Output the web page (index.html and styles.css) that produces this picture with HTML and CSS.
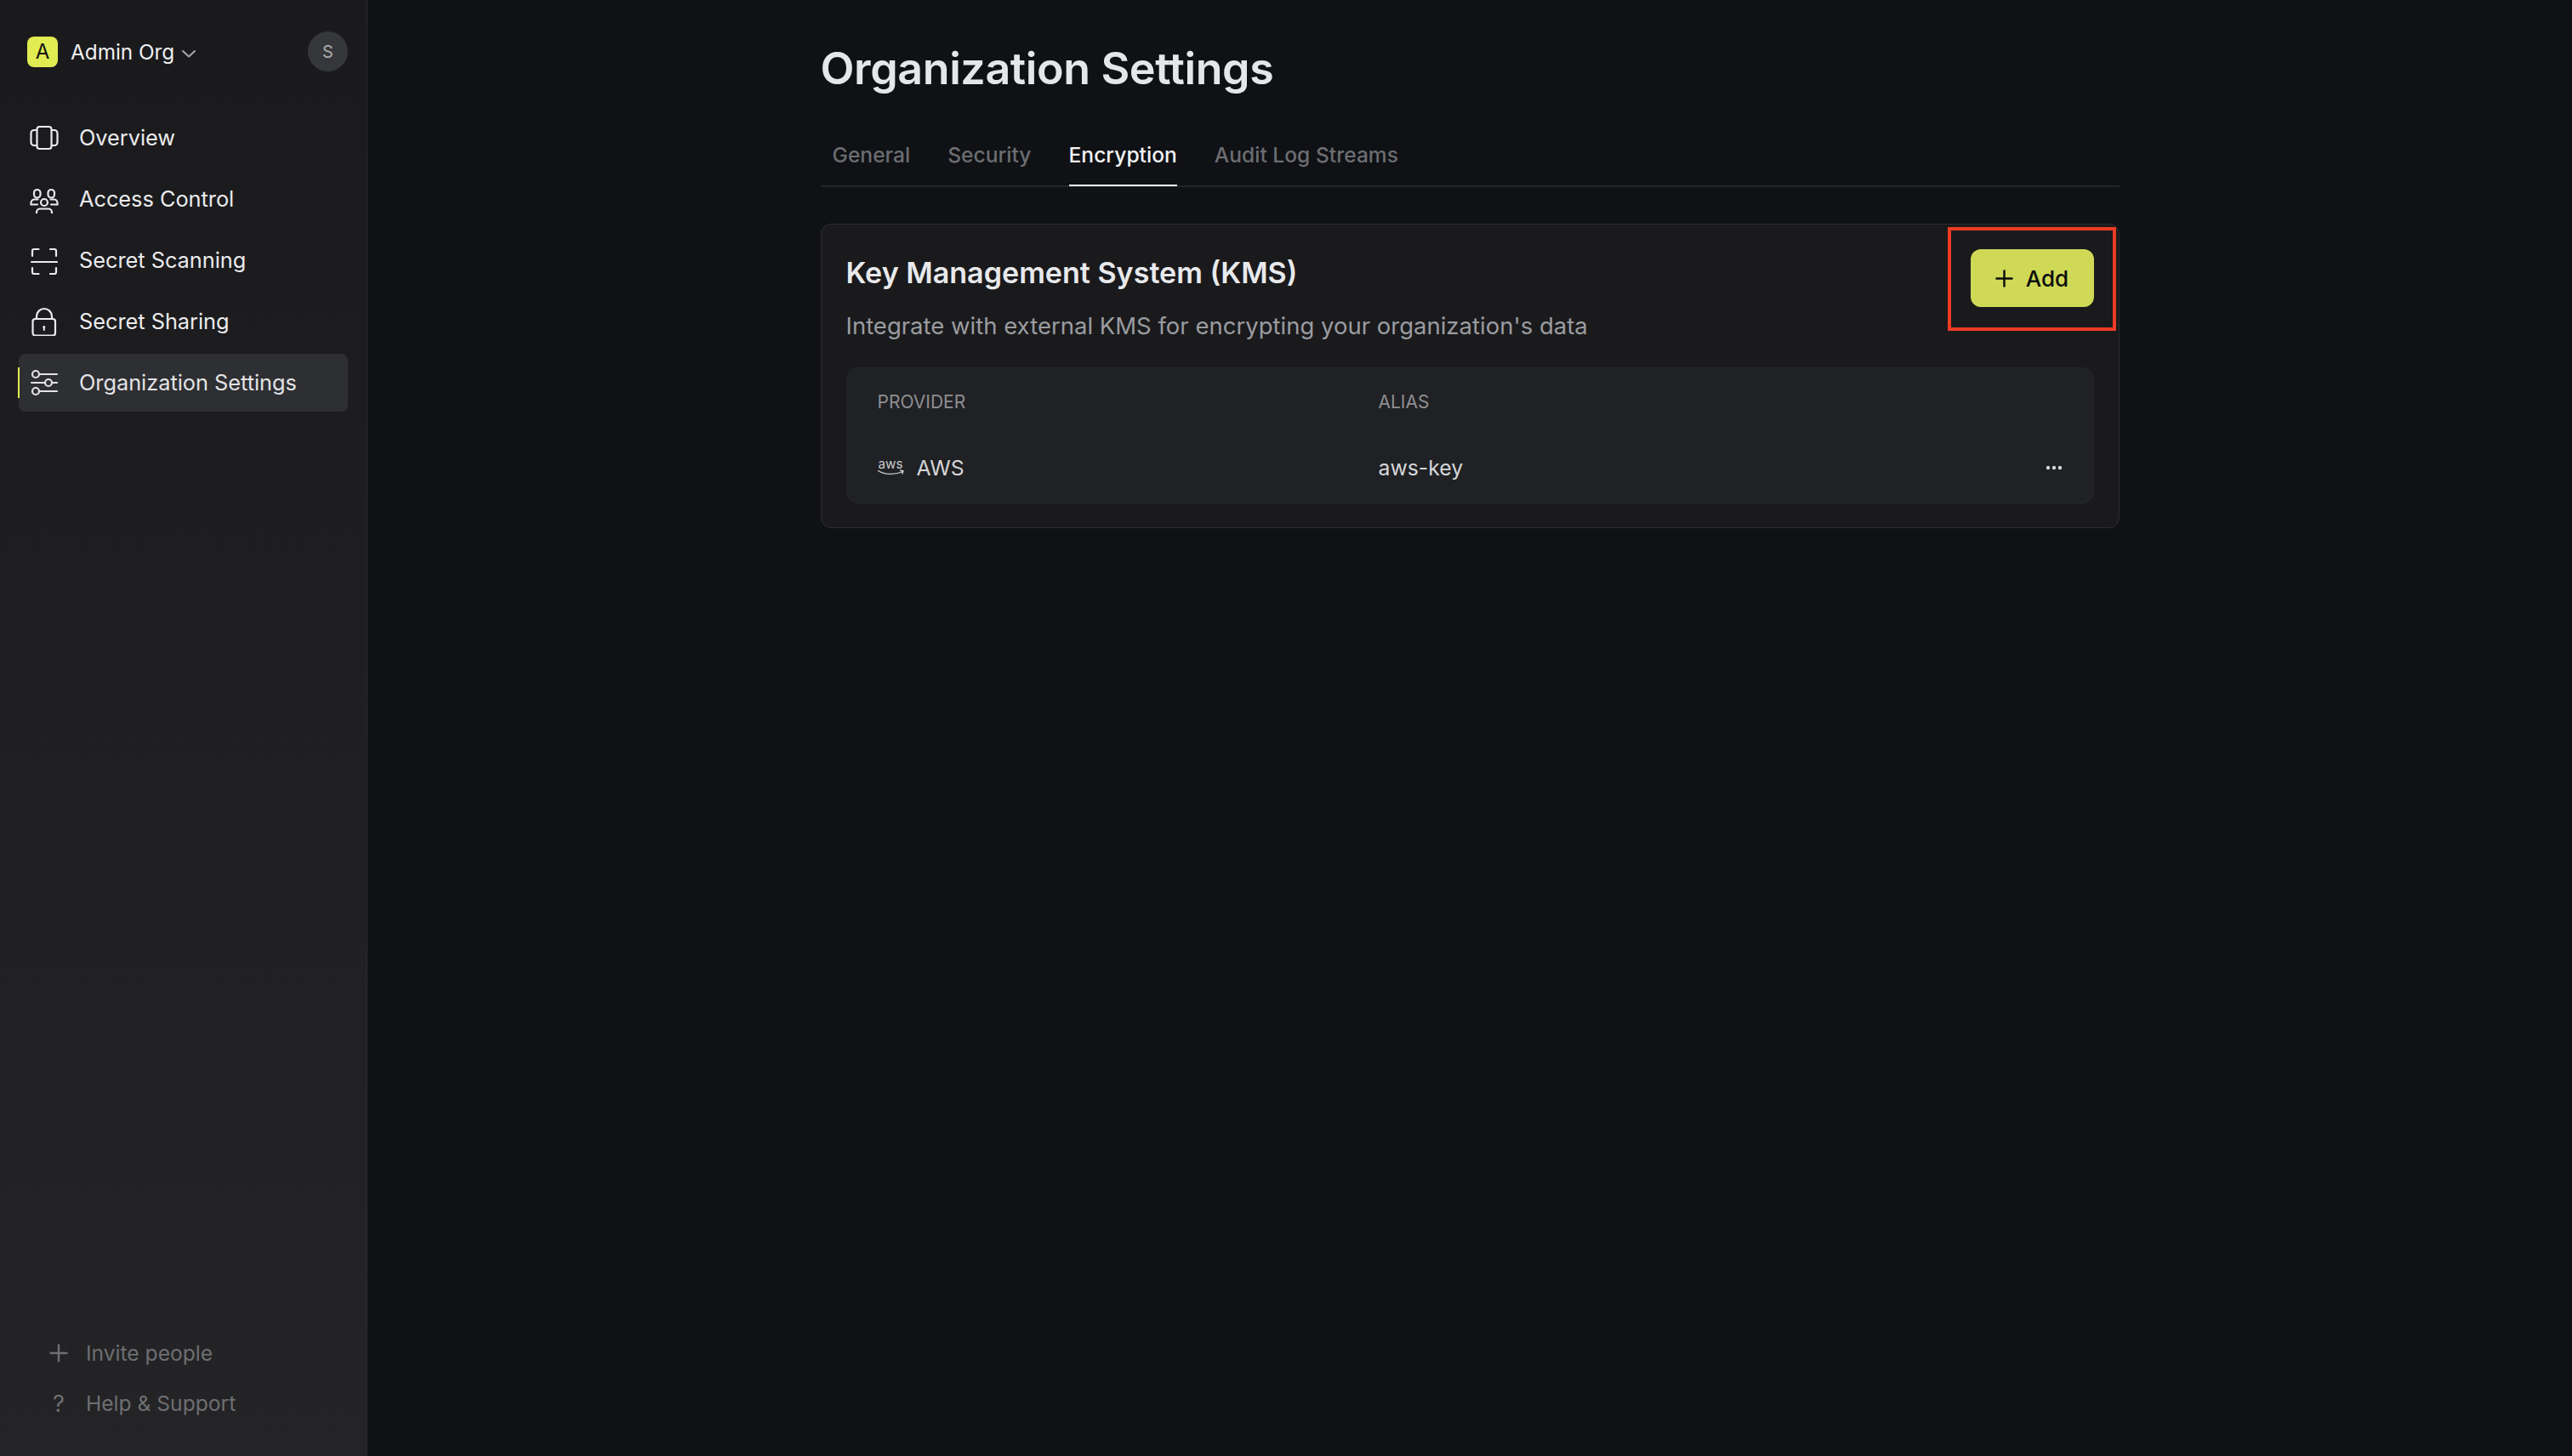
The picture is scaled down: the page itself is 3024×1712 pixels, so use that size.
FILE: index.html
```html
<!DOCTYPE html>
<html lang="en">
<head>
  <meta charset="UTF-8">
  <title>Organization Settings</title>
  <link rel="stylesheet" href="styles.css">
</head>
<body>
  <div class="app">
    <aside class="sidebar">
      <div class="org-row">
        <span class="org-logo">A</span>
        <span class="org-name">Admin Org</span>
        <svg class="org-chevron" viewBox="0 0 18 10" fill="none" stroke="#a8a8aa" stroke-width="2" stroke-linecap="round" stroke-linejoin="round"><path d="M2 2l7 6.5L16 2"/></svg>
        <span class="avatar">S</span>
      </div>

      <nav class="nav">
        <a class="nav-item">
          <svg class="nav-icon" viewBox="0 -2 34 34" fill="none" stroke="currentColor" stroke-width="2.2" stroke-linejoin="round"><rect x="8.5" y="2" width="17" height="26" rx="3"/><path d="M8.5 6H5a3.5 3.5 0 0 0-3.5 3.5v11A3.5 3.5 0 0 0 5 24h3.5M25.5 6H29a3.5 3.5 0 0 1 3.5 3.5v11A3.5 3.5 0 0 1 29 24h-3.5"/></svg>
          Overview
        </a>
        <a class="nav-item">
          <svg class="nav-icon" viewBox="0 -4 34 34" fill="none" stroke="currentColor" stroke-width="2.2" stroke-linecap="round"><rect x="5" y="2" width="7.5" height="9.5" rx="3.75"/><rect x="21.5" y="2" width="7.5" height="9.5" rx="3.75"/><rect x="13" y="13" width="8" height="8" rx="4"/><path d="M9.5 13.5H5.5a4 4 0 0 0-4 4v2H9M24.5 13.5h4a4 4 0 0 1 4 4v2H25"/><path d="M8 32v-3.5a4 4 0 0 1 4-4h10a4 4 0 0 1 4 4V32z"/></svg>
          Access Control
        </a>
        <a class="nav-item">
          <svg class="nav-icon" viewBox="0 0 34 34" fill="none" stroke="currentColor" stroke-width="2.2" stroke-linecap="round" stroke-linejoin="round"><path d="M3 12V6a2 2 0 0 1 2-2h5.500M24 4h5a2 2 0 0 1 2 2v6M31 26v5a2 2 0 0 1-2 2h-5M10.5 33H5a2 2 0 0 1-2-2v-5M2 19h30"/></svg>
          Secret Scanning
        </a>
        <a class="nav-item">
          <svg class="nav-icon" viewBox="0 0 34 34" fill="none" stroke="currentColor" stroke-width="2.2" stroke-linecap="round" stroke-linejoin="round"><rect x="3.5" y="14" width="26.5" height="19.5" rx="3"/><path d="M8 14v-3a9 9 0 0 1 18 0v3"/><path d="M16.8 24v3" stroke-width="2"/><circle cx="16.8" cy="23.5" r="1.4" fill="currentColor" stroke="none"/></svg>
          Secret Sharing
        </a>
        <a class="nav-item nav-item-active">
          <svg class="nav-icon" viewBox="0 0 34 34" fill="none" stroke="currentColor" stroke-width="2.2" stroke-linecap="round"><circle cx="7" cy="7" r="4"/><path d="M11 7h21"/><circle cx="22" cy="17" r="4"/><path d="M2 17h16M26 17h6"/><circle cx="7" cy="27" r="4"/><path d="M11 27h21"/></svg>
          Organization Settings
        </a>
      </nav>

      <div class="sidebar-footer">
        <a class="footer-item">
          <span class="footer-icon">
            <svg viewBox="0 0 22 22" fill="none" stroke="currentColor" stroke-width="2.4" stroke-linecap="round"><path d="M11 1.5v19M1.5 11h19"/></svg>
          </span>
          Invite people
        </a>
        <a class="footer-item">
          <span class="footer-icon footer-question">?</span>
          Help &amp; Support
        </a>
      </div>
    </aside>

    <main class="main">
      <div class="content">
        <h1 class="page-title">Organization Settings</h1>

        <div class="tabs">
          <span class="tab">General</span>
          <span class="tab">Security</span>
          <span class="tab tab-active">Encryption</span>
          <span class="tab">Audit Log Streams</span>
        </div>

        <section class="card">
          <div class="card-head">
            <div>
              <h2 class="card-title">Key Management System (KMS)</h2>
              <p class="card-desc">Integrate with external KMS for encrypting your organization's data</p>
            </div>
            <button class="add-btn">
              <svg viewBox="0 0 22 22" fill="none" stroke="currentColor" stroke-width="2.6" stroke-linecap="round"><path d="M11 1.5v19M1.5 11h19"/></svg>
              Add
            </button>
          </div>

          <div class="table">
            <div class="table-row table-header">
              <span>Provider</span>
              <span>Alias</span>
            </div>
            <div class="table-row table-body">
              <span class="provider">
                <svg class="aws-logo" viewBox="0 0 32 20" fill="none">
                  <text x="0.5" y="10.5" font-family="Inter, sans-serif" font-size="16.5" textLength="29" lengthAdjust="spacingAndGlyphs" fill="#c9cacc">aws</text>
                  <path d="M0.5 13.5c8 5 20 5 29 1M26.5 13l3.5 .8-1 3.2" stroke="#c9cacc" stroke-width="1.3" stroke-linecap="round"/>
                </svg>
                AWS
              </span>
              <span>aws-key</span>
              <svg class="more-icon" viewBox="0 0 20 6" fill="#d6d7d9"><circle cx="3" cy="3" r="2.2"/><circle cx="10" cy="3" r="2.2"/><circle cx="17" cy="3" r="2.2"/></svg>
            </div>
          </div>

          <div class="highlight-box"></div>
        </section>
      </div>
    </main>
  </div>
</body>
</html>
```

FILE: styles.css
```css
/* General Styles */
* {
  box-sizing: border-box;
}

html,
body {
  margin: 0;
  height: 100%;
}

body {
  font-family: Inter, "Noto Sans", sans-serif;
  background-color: #0f1115;
  color: #e5e6ea;
}

.app {
  display: flex;
  height: 100vh;
}

/* Sidebar */
.sidebar {
  width: 432px;
  flex-shrink: 0;
  display: flex;
  flex-direction: column;
  background: linear-gradient(180deg, #1a1a1c, #242426);
  border-right: 1px solid #2a2b2e;
}

.org-row {
  display: flex;
  align-items: center;
  height: 47px;
  margin-top: 37px;
  padding: 0 22px 0 32px;
}

.org-logo {
  width: 36px;
  height: 36px;
  border-radius: 8px;
  background-color: #e0ec52;
  color: #111;
  font-size: 24px;
  display: flex;
  align-items: center;
  justify-content: center;
}

.org-name {
  margin-left: 15px;
  font-size: 24.3px;
  color: #f0f0f2;
}

.org-chevron {
  width: 18px;
  height: 10px;
  margin: 4px 0 0 8px;
}

.avatar {
  width: 47px;
  height: 47px;
  margin-left: auto;
  border-radius: 50%;
  background-color: #36373a;
  color: #a9abae;
  font-size: 20px;
  display: flex;
  align-items: center;
  justify-content: center;
}

.nav {
  display: flex;
  flex-direction: column;
  gap: 4px;
  margin: 44px 22px 0 22px;
}

.nav-item {
  position: relative;
  display: flex;
  align-items: center;
  gap: 24px;
  height: 68px;
  padding-left: 13px;
  padding-bottom: 1px;
  border-radius: 8px;
  font-size: 25.3px;
  color: #ebebed;
}

.nav-item-active {
  background-color: #2e2f32;
  color: #e3e3e6;
}

.nav-item-active::before {
  content: "";
  position: absolute;
  left: -1px;
  top: 16px;
  width: 2px;
  height: 36px;
  background-color: #e0ec52;
}

.nav-icon {
  width: 34px;
  height: 34px;
  flex-shrink: 0;
}

.sidebar-footer {
  display: flex;
  flex-direction: column;
  gap: 17px;
  margin-top: auto;
  padding: 0 0 41px 58px;
}

.footer-item {
  display: flex;
  align-items: center;
  height: 42px;
  font-size: 24.6px;
  color: #6e6f72;
}

.footer-icon {
  width: 22px;
  margin-right: 21px;
  display: flex;
  justify-content: center;
}

.footer-icon svg {
  width: 22px;
  height: 22px;
}

.footer-question {
  font-size: 27px;
}

/* Main content */
.main {
  flex: 1;
  display: flex;
  justify-content: center;
}

.content {
  width: 1527px;
}

.page-title {
  margin: 49px 0 0;
  font-size: 52px;
  line-height: 64px;
  font-weight: 600;
  letter-spacing: -0.4px;
  color: #e5e6ea;
}

.tabs {
  display: flex;
  gap: 44px;
  margin-top: 44px;
  padding-left: 14px;
  border-bottom: 2px solid #24262a;
}

.tab {
  height: 62px;
  padding-top: 10px;
  font-size: 24.6px;
  font-weight: 500;
  color: #6c6d71;
  margin-bottom: -1px;
}

.tab-active {
  color: #f4f4f5;
  border-bottom: 2px solid #f4f4f5;
}

.card {
  position: relative;
  height: 358px;
  margin-top: 43px;
  padding: 29px 29px 0;
  background-color: #1a1a1c;
  border: 1px solid #2c2d30;
  border-radius: 12px;
}

.card-head {
  display: flex;
  justify-content: space-between;
}

.card-title {
  margin: 6px 0 0;
  font-size: 34.1px;
  line-height: 44px;
  font-weight: 600;
  color: #e8e9ec;
}

.card-desc {
  margin: 21px 0 0;
  font-size: 27.5px;
  line-height: 38px;
  color: #9a9ca1;
}

.add-btn {
  display: flex;
  align-items: center;
  justify-content: center;
  gap: 15px;
  width: 145px;
  height: 68px;
  padding-bottom: 1px;
  border: none;
  border-radius: 12px;
  background-color: #cfd956;
  color: #0d0d0d;
  font-family: inherit;
  font-size: 26px;
  font-weight: 500;
}

.add-btn svg {
  width: 21px;
  height: 21px;
}

.table {
  margin-top: 30px;
  height: 160px;
  background-color: #202124;
  border: 1px solid #26272a;
  border-radius: 14px;
}

.table-row {
  display: grid;
  grid-template-columns: 589px 1fr auto;
  align-items: center;
  padding: 0 36px;
}

.table-header {
  height: 79px;
  font-size: 21px;
  text-transform: uppercase;
  color: #8e8f92;
}

.table-body {
  height: 75px;
  font-size: 24.8px;
  color: #d5d6d9;
}

.provider {
  display: flex;
  align-items: center;
  gap: 14px;
}

.aws-logo {
  width: 32px;
  height: 20px;
  overflow: visible;
}

.more-icon {
  width: 20px;
  height: 6px;
}

/* red annotation drawn over the screenshot */
.highlight-box {
  position: absolute;
  top: 3px;
  right: 3px;
  width: 198px;
  height: 122px;
  border: 4px solid #ee3b24;
}
```
